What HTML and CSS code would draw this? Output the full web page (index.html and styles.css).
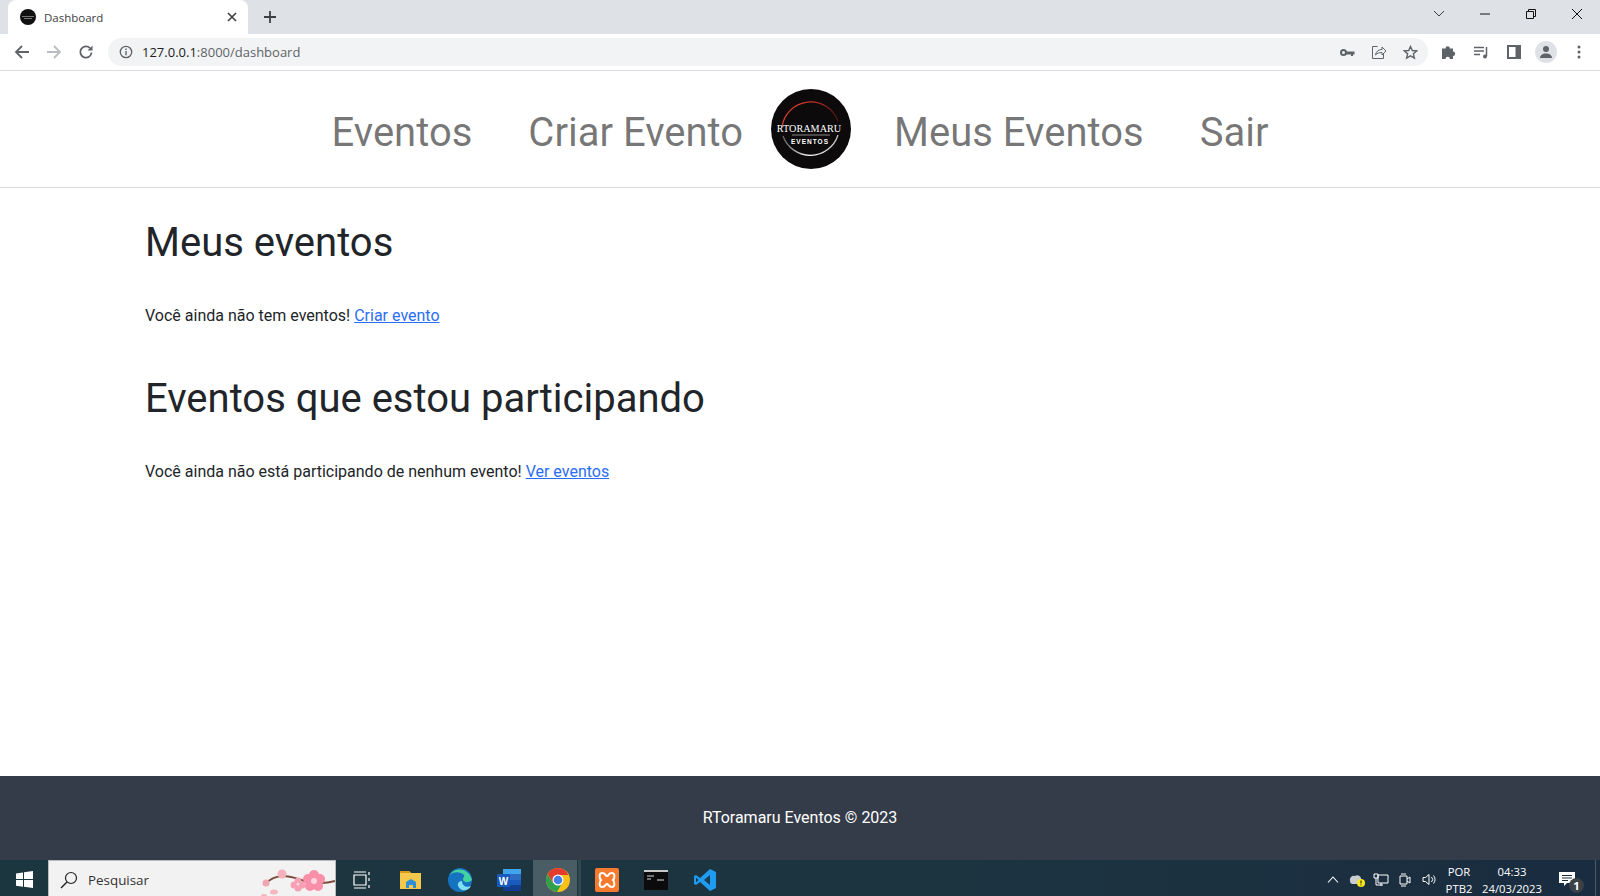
FILE: index.html
```html
<!DOCTYPE html>
<html lang="en">
<head>
    <meta charset="UTF-8">
    <meta name="viewport" content="width=device-width, initial-scale=1.0">
    <title>Dashboard</title>
    <link rel="stylesheet" href="styles.css">
</head>
<body>
    <div class="tabstrip">
        <div class="tab">
            <svg class="tab-favicon" width="16" height="16" viewBox="0 0 16 16"><circle cx="8" cy="8" r="8" fill="#111"/><path d="M2 7.500h12M4 9.500h8" stroke="#777"/></svg>
            <span class="tab-title">Dashboard</span>
            <svg class="tab-close" width="10" height="10" viewBox="0 0 10 10"><path d="M1 1l8 8M9 1l-8 8" stroke="#3c4043" stroke-width="1.600"/></svg>
        </div>
        <svg class="new-tab" width="14" height="14" viewBox="0 0 14 14"><path d="M7 1v12M1 7h12" stroke="#3c4043" stroke-width="1.800"/></svg>
        <div class="window-controls">
            <svg width="12" height="8" viewBox="0 0 12 8"><path d="M1 1l5 5 5-5" fill="none" stroke="#3c4043"/></svg>
            <svg width="12" height="12" viewBox="0 0 12 12"><path d="M1 6h10" stroke="#111" stroke-width="1"/></svg>
            <svg width="12" height="12" viewBox="0 0 12 12"><path d="M1.500 3.500h7v7h-7zM3.500 3.500v-2h7v7h-2" fill="none" stroke="#111"/></svg>
            <svg width="12" height="12" viewBox="0 0 12 12"><path d="M1 1l10 10M11 1L1 11" stroke="#111"/></svg>
        </div>
    </div>
    <div class="toolbar">
        <div class="nav-buttons">
            <svg width="16" height="16" viewBox="0 0 16 16"><path d="M15 8H2M8 2L2 8l6 6" fill="none" stroke="#5f6368" stroke-width="1.800"/></svg>
            <svg width="16" height="16" viewBox="0 0 16 16"><path d="M1 8h13M8 2l6 6-6 6" fill="none" stroke="#b9bcc0" stroke-width="1.800"/></svg>
            <svg width="16" height="16" viewBox="0 0 16 16"><path d="M13.500 8.500A5.600 5.600 0 1 1 12 4.200" fill="none" stroke="#5f6368" stroke-width="1.800"/><path d="M14.500 1.500v5h-5z" fill="#5f6368"/></svg>
        </div>
        <div class="omnibox">
            <svg width="14" height="14" viewBox="0 0 14 14"><circle cx="7" cy="7" r="5.700" fill="none" stroke="#5f6368" stroke-width="1.300"/><path d="M7 6v4.200M7 3.600v1.400" stroke="#5f6368" stroke-width="1.400"/></svg>
            <span class="url"><span class="url-host">127.0.0.1</span>:8000/dashboard</span>
            <div class="omnibox-actions">
                <svg width="15" height="9" viewBox="0 0 15 9"><circle cx="3.500" cy="4.500" r="2.500" fill="none" stroke="#5f6368" stroke-width="2"/><path d="M6 3.500h8.500v3h-1.500v1.500h-2V6.500H6z" fill="#5f6368"/></svg>
                <svg width="16" height="16" viewBox="0 0 16 16"><path d="M6.500 2.500H1.500v12h11V10" fill="none" stroke="#5f6368"/><path d="M4.500 11c.5-3.500 3-5.500 6.500-5.500V3l4 4-4 4V8.500c-2.500 0-4.800.5-6.500 2.500z" fill="none" stroke="#5f6368"/></svg>
                <svg width="15" height="15" viewBox="0 0 15 15"><path d="M7.500 1.500l1.800 4 4.400.4-3.300 2.900 1 4.300-3.900-2.300-3.900 2.300 1-4.300L1.300 5.900l4.400-.4z" fill="none" stroke="#5f6368" stroke-width="1.400"/></svg>
            </div>
        </div>
        <div class="toolbar-actions">
            <svg width="15" height="15" viewBox="0 0 15 15"><path d="M1 3.500h3.500a2.200 2.200 0 1 1 4.400 0H12V6.500a2.200 2.200 0 1 1 0 4.400V14H8.900a2.200 2.200 0 1 0-4.400 0H1z" fill="#5f6368"/></svg>
            <svg width="15" height="13" viewBox="0 0 15 13"><path d="M0 1.500h10M0 5h10M0 8.500h6" stroke="#5f6368" stroke-width="1.300"/><path d="M12.500 1v9" stroke="#5f6368" stroke-width="1.500"/><circle cx="11" cy="10.500" r="2" fill="#5f6368"/></svg>
            <svg width="14" height="14" viewBox="0 0 14 14"><path d="M0 0h14v14H0z" fill="#5f6368"/><path d="M2 2h6.500v10H2z" fill="#fff"/></svg>
            <span class="avatar">
                <svg width="14" height="12" viewBox="0 0 14 12"><circle cx="7" cy="3" r="3" fill="#5f6368"/><path d="M1 12c0-2.500 2.500-4.500 6-4.500s6 2 6 4.500z" fill="#5f6368"/></svg>
            </span>
            <svg width="4" height="14" viewBox="0 0 4 14"><circle cx="2" cy="2" r="1.500" fill="#5f6368"/><circle cx="2" cy="7" r="1.500" fill="#5f6368"/><circle cx="2" cy="12" r="1.500" fill="#5f6368"/></svg>
        </div>
    </div>

    <nav class="navbar">
        <a class="nav-link" href="#">Eventos</a>
        <a class="nav-link" href="#">Criar Evento</a>
        <svg class="logo" width="80" height="80" viewBox="0 0 80 80">
            <defs>
                <linearGradient id="arcRed" x1="0" y1="0" x2="1" y2="0">
                    <stop offset="0" stop-color="#e0402f"/>
                    <stop offset=".6" stop-color="#c22f25"/>
                    <stop offset="1" stop-color="#4a1512"/>
                </linearGradient>
                <linearGradient id="arcWhite" x1="0" y1="0" x2="1" y2="0">
                    <stop offset="0" stop-color="#666"/>
                    <stop offset=".5" stop-color="#fff"/>
                    <stop offset="1" stop-color="#bbb"/>
                </linearGradient>
            </defs>
            <circle cx="40" cy="40" r="40" fill="#0d0a0b"/>
            <path d="M11 38A29 29 0 0 1 67 32" fill="none" stroke="url(#arcRed)" stroke-width="1.300"/>
            <path d="M12 47A29 29 0 0 0 67 46" fill="none" stroke="url(#arcWhite)" stroke-width="1.300"/>
            <text class="logo-name" x="38" y="43" text-anchor="middle">RTORAMARU</text>
            <path d="M21 46h38" stroke="#bbb" stroke-width=".7"/>
            <text class="logo-sub" x="39" y="55" text-anchor="middle">EVENTOS</text>
        </svg>
        <a class="nav-link" href="#">Meus Eventos</a>
        <a class="nav-link" href="#">Sair</a>
    </nav>

    <main class="content">
        <section class="block">
            <h2>Meus eventos</h2>
            <p>Você ainda não tem eventos! <a href="#">Criar evento</a></p>
        </section>
        <section class="block">
            <h2>Eventos que estou participando</h2>
            <p>Você ainda não está participando de nenhum evento! <a href="#">Ver eventos</a></p>
        </section>
    </main>

    <footer class="footer">RToramaru Eventos &copy; 2023</footer>

    <div class="taskbar">
        <div class="start">
            <svg width="17" height="17" viewBox="0 0 17 17"><path d="M0 2.400l7-1v6.700H0zM8 1.200L17 0v8.100H8zM0 9h7v6.700l-7-1zM8 9h9v8l-9-1.200z" fill="#fff"/></svg>
        </div>
        <div class="search">
            <svg width="18" height="18" viewBox="0 0 18 18"><circle cx="11" cy="7" r="5.500" fill="none" stroke="#222" stroke-width="1.200"/><path d="M7 11l-6 6" stroke="#222" stroke-width="1.400"/></svg>
            <span>Pesquisar</span>
            <svg class="blossom" width="74" height="36" viewBox="0 0 74 36">
                <path d="M5 22C15 13 25 14 37 18S60 24 74 20" fill="none" stroke="#7a4b3c" stroke-width="2"/>
                <g fill="#f98fa8">
                    <circle cx="53" cy="14" r="5"/><circle cx="59" cy="18" r="5"/><circle cx="57" cy="25" r="5"/><circle cx="49" cy="25" r="5"/><circle cx="47" cy="18" r="5"/>
                </g>
                <circle cx="53" cy="20" r="3" fill="#fcd5e0"/>
                <g fill="#f7a0b4">
                    <circle cx="37" cy="20" r="3.500"/><circle cx="41" cy="24" r="3.500"/><circle cx="37" cy="27" r="3.500"/><circle cx="33" cy="24" r="3.500"/>
                </g>
                <circle cx="37" cy="23" r="1.500" fill="#fcd5e0"/>
                <circle cx="21" cy="13" r="4.500" fill="#f4b0bd"/><circle cx="5" cy="22" r="3.500" fill="#f0a5b2"/>
                <ellipse cx="13" cy="31" rx="4" ry="2.500" fill="#f6b6c0"/><ellipse cx="3" cy="35" rx="3" ry="2" fill="#f6b6c0"/>
            </svg>
        </div>
        <div class="task-icons">
            <span class="task-icon">
                <svg width="18" height="18" viewBox="0 0 18 18"><path d="M1 4h12v10H1zM1 1h12M1 17h12M16 1v3M16 7v3M16 14v3" fill="none" stroke="#fff" stroke-width="1.200"/></svg>
            </span>
            <span class="task-icon">
                <svg width="22" height="18" viewBox="0 0 22 18"><path d="M0 0h9l2 2h10v16H0z" fill="#f5c84c"/><path d="M0 0h9l2 2H0z" fill="#d99a1c"/><path d="M6 17v-6l5-3 5 3v6h-3v-3H9v3z" fill="#2f8fd8"/></svg>
            </span>
            <span class="task-icon">
                <svg width="24" height="24" viewBox="0 0 24 24"><circle cx="12" cy="12" r="12" fill="#1573c2"/><path d="M2 7C5 0 20-2 24 12c-3 3-9 3-9-1 0-2 2-2 1-4C13 4 6 3 2 7z" fill="#43d3a0"/><path d="M14 13c-5 0-6 6 0 9 3 1 7 0 9-4-4 2-9 0-9-5z" fill="#7ee0f0"/></svg>
            </span>
            <span class="task-icon">
                <svg width="24" height="22" viewBox="0 0 24 22"><path d="M6 0h18v22H6z" fill="#2b6cc4"/><path d="M6 0h18v5H6z" fill="#41a5ee"/><path d="M6 11h18v5H6z" fill="#185abd"/><path d="M6 16h18v6H6z" fill="#103f91"/><path d="M0 5h13v13H0z" fill="#185abd"/><text class="word-letter" x="6.500" y="15.500" text-anchor="middle">W</text></svg>
            </span>
            <span class="task-icon task-icon-active">
                <svg width="24" height="24" viewBox="0 0 24 24"><circle cx="12" cy="12" r="12" fill="#fbc116"/><path d="M12 0a12 12 0 0 0-10.400 6l5.200 9L12 7h10.400A12 12 0 0 0 12 0z" fill="#e33b2e"/><path d="M1.600 6A12 12 0 0 0 11 24l5.200-9H6.800z" fill="#2fa04e"/><circle cx="12" cy="12" r="5.500" fill="#fff"/><circle cx="12" cy="12" r="4.300" fill="#3f80ea"/></svg>
            </span>
            <span class="task-icon">
                <svg width="24" height="24" viewBox="0 0 24 24"><rect width="24" height="24" rx="2" fill="#f47b30"/><path d="M7 5c4 0 3 3 5 3s1-3 5-3c3 0 3 5 1 7 2 2 2 7-1 7-4 0-3-3-5-3s-1 3-5 3c-3 0-3-5-1-7-2-2-2-7 1-7z" fill="none" stroke="#fff" stroke-width="2"/></svg>
            </span>
            <span class="task-icon">
                <svg width="24" height="20" viewBox="0 0 24 20"><path d="M0 0h24v20H0z" fill="#0b0b0b"/><path d="M0 0h24v2H0z" fill="#c8c8c8"/><path d="M3 6h7M3 9h4M13 10h7" stroke="#ddd"/></svg>
            </span>
            <span class="task-icon">
                <svg width="24" height="24" viewBox="0 0 24 24"><path d="M17 1l6 3v16l-6 3L7 14l-4 3-2-1V8l2-1 4 3z" fill="#1f9cf0"/><path d="M17 7l-6 5 6 5z" fill="#173c55"/><path d="M3 9.500v5L5.500 12z" fill="#173c55"/></svg>
            </span>
        </div>
        <div class="tray">
            <div class="tray-icons">
                <svg width="12" height="7" viewBox="0 0 12 7"><path d="M1 6.500L6 1l5 5.500" fill="none" stroke="#fff" stroke-width="1.100"/></svg>
                <svg width="17" height="14" viewBox="0 0 17 14"><path d="M1 8a4 4 0 0 1 5-5 4 4 0 0 1 6 2v6H3a3 3 0 0 1-2-3z" fill="#c9ccd0"/><circle cx="12" cy="10" r="4" fill="#f8e71c"/><path d="M12 7.500v3M12 11.500v1" stroke="#111"/></svg>
                <svg width="16" height="14" viewBox="0 0 16 14"><path d="M5 2h10v8H5zM1 1h4v4H1zM3 5v7h7M8 10v3" fill="none" stroke="#fff"/></svg>
                <svg width="12" height="16" viewBox="0 0 12 16"><path d="M1 4h7v8H1zM8 7l3-2v6l-3-2M2 2h5M2 14h5" fill="none" stroke="#fff"/></svg>
                <svg width="15" height="13" viewBox="0 0 15 13"><path d="M1 4.500h2.500L7 1.500v10l-3.500-3H1zM9.500 4a3.500 3.500 0 0 1 0 5M11.500 2.500a6 6 0 0 1 0 8" fill="none" stroke="#fff"/></svg>
            </div>
            <div class="tray-text tray-lang"><span>POR</span><span>PTB2</span></div>
            <div class="tray-text tray-clock"><span>04:33</span><span>24/03/2023</span></div>
            <span class="notify">
                <svg width="17" height="15" viewBox="0 0 17 15"><path d="M0 0h16v11H8l-3 3v-3H0z" fill="#fff"/><path d="M3 3.500h10M3 6h10M3 8.500h6" stroke="#1b2c3c"/></svg>
                <span class="notify-count">1</span>
            </span>
            <span class="show-desktop"></span>
        </div>
    </div>
</body>
</html>
```

FILE: styles.css
```css
* {
    box-sizing: border-box;
}
body {
    margin: 0;
    height: 100vh;
    display: flex;
    flex-direction: column;
    font-family: Roboto, sans-serif;
    background-color: #fff;
    color: #212529;
    overflow: hidden;
}
svg {
    display: block;
    flex: none;
}

/* browser chrome */
.tabstrip {
    height: 34px;
    background-color: #dee1e6;
    display: flex;
    align-items: flex-end;
    padding-left: 8px;
}
.tab {
    width: 240px;
    height: 34px;
    background: #fff;
    border-radius: 8px 8px 0 0;
    display: flex;
    align-items: center;
    padding: 0 11px 0 12px;
    font-family: "Open Sans", sans-serif;
    font-size: 11.500px;
    color: #3c4043;
}
.tab-favicon {
    margin-right: 8px;
}
.tab-title {
    flex: 1;
}
.new-tab {
    margin: 0 0 10px 15px;
}
.window-controls {
    margin-left: auto;
    align-self: flex-start;
    height: 28px;
    display: flex;
    align-items: center;
    gap: 34px;
    padding-right: 17px;
}
.toolbar {
    height: 37px;
    background: #fff;
    border-bottom: 1px solid #dadce0;
    display: flex;
    align-items: center;
    padding-left: 14px;
}
.nav-buttons {
    display: flex;
    gap: 16px;
    margin-right: 14px;
}
.omnibox {
    flex: 1;
    height: 28px;
    background: #f1f3f4;
    border-radius: 14px;
    display: flex;
    align-items: center;
    padding: 0 10px 0 11px;
    font-family: "Open Sans", sans-serif;
    font-size: 13px;
    color: #5f6368;
}
.url {
    margin-left: 9px;
}
.url-host {
    color: #202124;
}
.omnibox-actions {
    margin-left: auto;
    display: flex;
    align-items: center;
    gap: 16px;
}
.toolbar-actions {
    display: grid;
    grid-template-columns: repeat(5, 32.500px);
    align-items: center;
    justify-items: center;
    padding: 0 5px;
}
.avatar {
    width: 22px;
    height: 22px;
    border-radius: 50%;
    background: #dee1e6;
    display: flex;
    align-items: center;
    justify-content: center;
}

/* site nav */
.navbar {
    height: 117px;
    border-bottom: 1px solid #d9d9d9;
    display: flex;
    align-items: center;
    justify-content: center;
}
.nav-link {
    font-size: 40px;
    color: rgba(0, 0, 0, .55);
    text-decoration: none;
    padding: 6px 28px 0;
}
.logo {
    margin-right: 15px;
}
.logo-name {
    font-family: "Liberation Serif", serif;
    font-size: 10.200px;
    fill: #fff;
}
.logo-sub {
    font-family: "Liberation Sans", sans-serif;
    font-size: 6.500px;
    font-weight: bold;
    letter-spacing: 1px;
    fill: #fff;
}

/* main */
.content {
    flex: 1;
    padding: 31px 145px 0;
}
.block {
    margin-bottom: 47px;
}
h2 {
    font-size: 40px;
    font-weight: 400;
    line-height: 1.2;
    margin: 0 0 37px;
}
p {
    font-size: 16px;
    line-height: 24px;
    margin: 0;
}
p a {
    color: #2a6df4;
}

.footer {
    height: 84px;
    padding-bottom: 2px;
    background-color: #353c49;
    color: #fff;
    font-size: 16px;
    display: flex;
    align-items: center;
    justify-content: center;
}

/* windows taskbar */
.taskbar {
    height: 36px;
    background: linear-gradient(to right, #1c363f, #1c3440 60%, #1a2c40);
    display: flex;
    color: #fff;
}
.start {
    width: 48px;
    padding-top: 3px;
    display: flex;
    align-items: center;
    justify-content: center;
}
.search {
    width: 288px;
    padding: 3px 0 0 11px;
    background: #f2f2f2;
    border: 1px solid #b9bcbe;
    border-bottom: none;
    display: flex;
    align-items: center;
    color: #333;
    font-family: "Open Sans", sans-serif;
    font-size: 13.400px;
    position: relative;
}
.search span {
    margin-left: 10px;
}
.blossom {
    position: absolute;
    right: 0;
    top: 0;
}
.task-icons {
    display: flex;
    margin-left: 1px;
}
.task-icon {
    width: 49px;
    padding-top: 3px;
    display: flex;
    align-items: center;
    justify-content: center;
}
.task-icon-active {
    background: linear-gradient(to right, #4a5d65 44px, transparent 44px, transparent 45px, #33474f 45px, #33474f 48px, transparent 48px);
}
.tray {
    margin-left: auto;
    display: flex;
    align-items: center;
    padding-top: 3px;
    font-family: "Open Sans", sans-serif;
    font-size: 11.300px;
}
.tray-icons {
    display: grid;
    grid-template-columns: repeat(5, 24px);
    justify-items: center;
    align-items: center;
}
.tray-text {
    display: flex;
    flex-direction: column;
    align-items: center;
    line-height: 17.500px;
    padding-top: 1px;
}
.tray-lang {
    width: 36px;
}
.tray-clock {
    width: 70px;
}
.notify {
    position: relative;
    width: 40px;
    display: flex;
    justify-content: center;
}
.notify-count {
    position: absolute;
    left: 22px;
    top: 6px;
    width: 15px;
    height: 15px;
    border-radius: 50%;
    background: #3a4147;
    text-align: center;
    line-height: 15px;
    font-weight: bold;
}
.show-desktop {
    align-self: stretch;
    width: 1px;
    margin: -3px 4px 0 8px;
    background: #4a5a68;
}
.word-letter {
    font-family: "Liberation Sans", sans-serif;
    font-size: 10px;
    font-weight: bold;
    fill: #fff;
}
```
